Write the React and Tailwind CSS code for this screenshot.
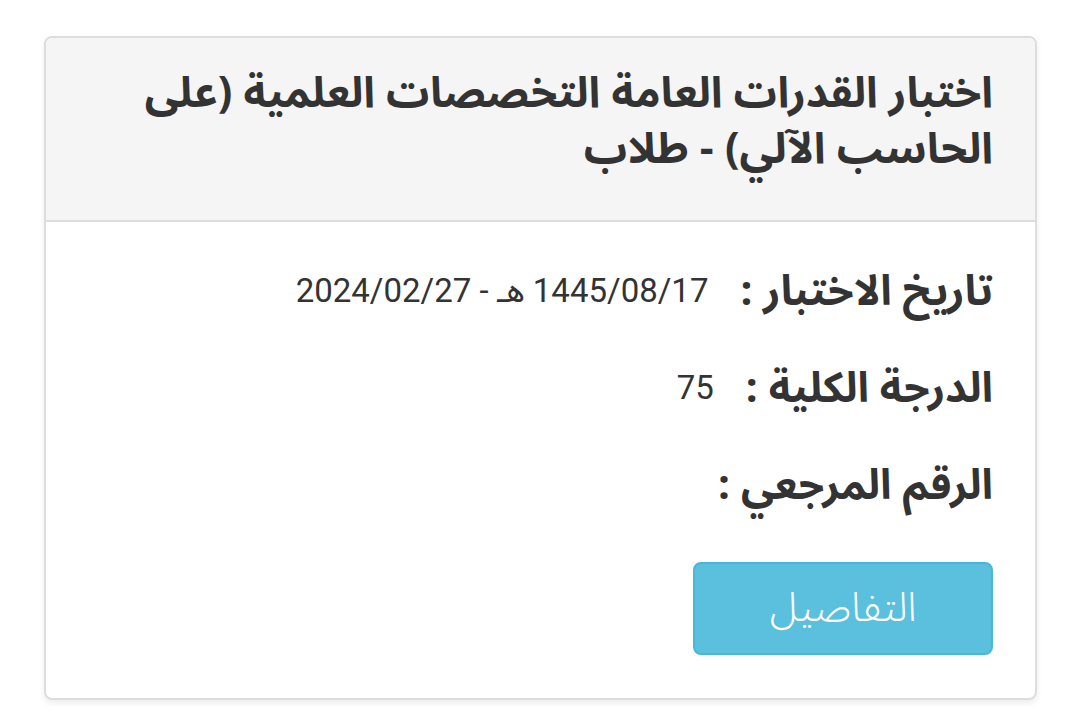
export default function App() {
  const rows = [
    { label: 'تاريخ الاختبار', value: '1445/08/17 هـ - 2024/02/27' },
    { label: 'الدرجة الكلية', value: '75' },
    { label: 'الرقم المرجعي', value: '' },
  ];

  return (
    <div dir="rtl" className="min-h-screen bg-white pt-[36px] pr-[43px] pl-[44px]" style={{ fontFamily: '"Noto Sans Arabic", Roboto, sans-serif' }}>
      <div className="rounded-[8px] border-2 border-[#dddddd] bg-white shadow-[0_3px_6px_rgba(0,0,0,0.08)] overflow-hidden">
        {/* card header */}
        <div className="bg-[#f5f5f5] border-b-2 border-[#dddddd] px-[42px] pt-[28px] h-[184px]">
          <h1 className="text-[43px] leading-[56px] font-bold text-[#333333]">
            اختبار القدرات العامة التخصصات العلمية (على الحاسب الآلي) - طلاب
          </h1>
        </div>

        {/* card body */}
        <div className="px-[42px] pt-[44px] pb-[43px]">
          <div className="flex flex-col gap-[47px]">
            {rows.map((r) => (
              <div key={r.label} className="flex items-center h-[50px]">
                <span className="text-[42px] font-bold text-[#333333]">{r.label} :</span>
                <span className="mr-[32px] text-[33px] text-[#333333]" style={{ fontFamily: 'Roboto, "Noto Sans Arabic", sans-serif' }}>
                  {r.value}
                </span>
              </div>
            ))}
          </div>

          <div className="mt-[52px] flex">
            <button className="w-[300px] h-[93px] rounded-[8px] bg-[#5bc0de] border-2 border-[#46b8da] text-white text-[41px] font-light">
              التفاصيل
            </button>
          </div>
        </div>
      </div>
    </div>
  );
}
